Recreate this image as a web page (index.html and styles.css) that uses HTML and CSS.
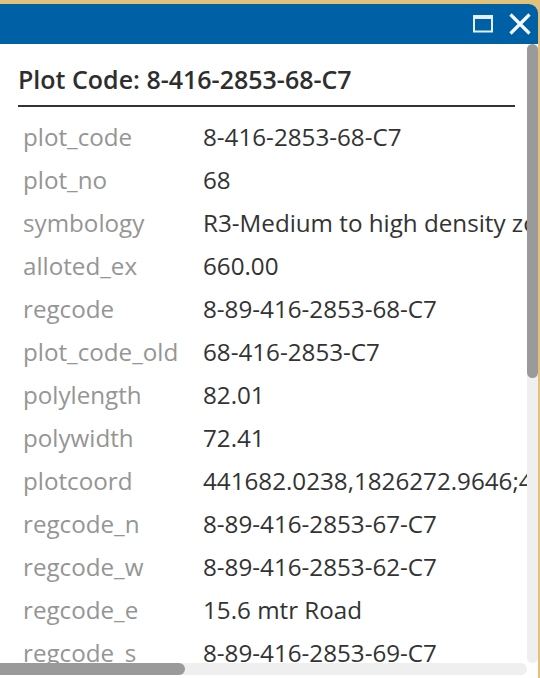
FILE: index.html
```html
<!DOCTYPE html>
<html>
<head>
<meta charset="utf-8">
<link rel="stylesheet" href="styles.css">
</head>
<body>
<div class="popup">
  <div class="header">
    <button class="hbtn" aria-label="Maximize">
      <svg width="22" height="20" viewBox="0 0 22 20"><rect x="2" y="2.5" width="18" height="15" fill="none" stroke="#e3f0fa" stroke-width="2"/><rect x="1" y="1" width="20" height="4" fill="#e3f0fa"/></svg>
    </button>
    <button class="hbtn" aria-label="Close">
      <svg width="24" height="22" viewBox="0 0 24 22"><path d="M2.5 1.5 L21.5 20.5 M21.5 1.5 L2.5 20.5" stroke="#f4f9fd" stroke-width="3.2"/></svg>
    </button>
  </div>
  <div class="viewport">
    <div class="title">Plot Code: 8-416-2853-68-C7</div>
    <div class="attrs">
      <div class="k">plot_code</div><div class="v">8-416-2853-68-C7</div>
      <div class="k">plot_no</div><div class="v">68</div>
      <div class="k">symbology</div><div class="v">R3-Medium to high density zone</div>
      <div class="k">alloted_ex</div><div class="v">660.00</div>
      <div class="k">regcode</div><div class="v">8-89-416-2853-68-C7</div>
      <div class="k">plot_code_old</div><div class="v">68-416-2853-C7</div>
      <div class="k">polylength</div><div class="v">82.01</div>
      <div class="k">polywidth</div><div class="v">72.41</div>
      <div class="k">plotcoord</div><div class="v">441682.0238,1826272.9646;441754.3012,1826279.1187;441759.4431,1826197.2203;441687.1702,1826190.8552</div>
      <div class="k">regcode_n</div><div class="v">8-89-416-2853-67-C7</div>
      <div class="k">regcode_w</div><div class="v">8-89-416-2853-62-C7</div>
      <div class="k">regcode_e</div><div class="v">15.6 mtr Road</div>
      <div class="k">regcode_s</div><div class="v">8-89-416-2853-69-C7</div>
    </div>
  </div>
  <div class="vbar"><div class="vthumb"></div></div>
  <div class="hbar"><div class="hthumb"></div></div>
  <div class="corner"></div>
</div>
</body>
</html>
```
FILE: styles.css
```css
html, body {
  margin: 0;
  padding: 0;
}
body {
  background: #e2c179;
  overflow: hidden;
  font-family: "Open Sans", Lato, sans-serif;
}
.popup {
  margin: 4px 0 0 0;
  width: 538px;
  padding-bottom: 3px;
  background: #fff;
  border-top-right-radius: 9px;
  overflow: hidden;
  display: grid;
  grid-template-columns: 527px 11px;
  grid-template-rows: 40px 619px 12px;
}
.header {
  grid-column: 1 / 3;
  background: #0060a6;
  display: flex;
  justify-content: flex-end;
  align-items: center;
  gap: 14px;
  padding-right: 6px;
}
.hbtn {
  border: 0;
  padding: 0;
  margin: 0;
  background: none;
  display: flex;
}
.viewport {
  overflow: hidden;
  padding: 0 12px 0 18px;
}
.title {
  margin-top: 20px;
  font-size: 25px;
  font-weight: 600;
  color: #2e2e2e;
  line-height: 30px;
  padding-bottom: 11px;
  border-bottom: 2px solid #333;
  white-space: nowrap;
}
.attrs {
  display: grid;
  grid-template-columns: 180px max-content;
  grid-auto-rows: 43px;
  padding: 8px 0 0 5px;
  font-size: 24.2px;
  line-height: 43px;
  white-space: nowrap;
}
.k {
  color: #959595;
}
.v {
  color: #333;
}
.vbar {
  background: #efefef;
  border-radius: 6px;
}
.vthumb {
  height: 334px;
  background: #9a9a9a;
  border-radius: 6px;
}
.hbar {
  background: #efefef;
  border-radius: 0 6px 6px 0;
}
.hthumb {
  width: 185px;
  height: 100%;
  background: #9a9a9a;
  border-radius: 0 6px 6px 0;
}
.corner {
  background: #fff;
}
```
